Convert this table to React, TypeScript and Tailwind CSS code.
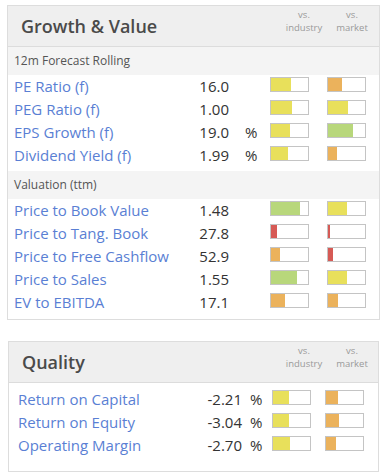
const YELLOW = '#e8e05b'
const ORANGE = '#ebb25c'
const GREEN = '#b8d77b'
const RED = '#d65a55'

type Row = { label: string; value: string; pct?: boolean; ind: [number, string]; mkt: [number, string] }

const forecast: Row[] = [
  { label: 'PE Ratio (f)', value: '16.0', ind: [20, YELLOW], mkt: [14, ORANGE] },
  { label: 'PEG Ratio (f)', value: '1.00', ind: [21, YELLOW], mkt: [20, YELLOW] },
  { label: 'EPS Growth (f)', value: '19.0', pct: true, ind: [19, YELLOW], mkt: [25, GREEN] },
  { label: 'Dividend Yield (f)', value: '1.99', pct: true, ind: [17, YELLOW], mkt: [9, ORANGE] },
]

const valuation: Row[] = [
  { label: 'Price to Book Value', value: '1.48', ind: [29, GREEN], mkt: [19, YELLOW] },
  { label: 'Price to Tang. Book', value: '27.8', ind: [6, RED], mkt: [2, RED] },
  { label: 'Price to Free Cashflow', value: '52.9', ind: [9, ORANGE], mkt: [5, RED] },
  { label: 'Price to Sales', value: '1.55', ind: [26, GREEN], mkt: [19, YELLOW] },
  { label: 'EV to EBITDA', value: '17.1', ind: [14, ORANGE], mkt: [10, ORANGE] },
]

const quality: Row[] = [
  { label: 'Return on Capital', value: '-2.21', pct: true, ind: [16, YELLOW], mkt: [12, ORANGE] },
  { label: 'Return on Equity', value: '-3.04', pct: true, ind: [16, YELLOW], mkt: [13, ORANGE] },
  { label: 'Operating Margin', value: '-2.70', pct: true, ind: [17, YELLOW], mkt: [10, ORANGE] },
]

function Bar({ fill }: { fill: [number, string] }) {
  return (
    <div className="mt-[2px] h-[15px] w-[39px] shrink-0 border border-[#c4c4c4] bg-white">
      <div className="h-full" style={{ width: fill[0], backgroundColor: fill[1] }} />
    </div>
  )
}

function VsLabel({ what }: { what: string }) {
  return (
    <div className="flex w-[48px] flex-col items-center text-[9.5px] leading-[13px] text-[#9a9a9a]">
      <span>vs.</span>
      <span>{what}</span>
    </div>
  )
}

function Header({ title, right }: { title: string; right: string }) {
  return (
    <div className={`flex h-[41px] items-start justify-between border-b border-[#dcdcdc] bg-[#efefef] pl-[13px] ${right}`}>
      <div className="self-center text-[18px] font-semibold text-[#4a4a4a]">{title}</div>
      <div className="flex pt-[2px]">
        <VsLabel what="industry" />
        <VsLabel what="market" />
      </div>
    </div>
  )
}

function SubHeader({ text }: { text: string }) {
  return (
    <div className="flex h-[28px] items-center bg-[#f4f4f4] pl-[6px] text-[12px] text-[#555555]">{text}</div>
  )
}

function MetricRow({ row }: { row: Row }) {
  return (
    <div className="flex h-[23px] items-start text-[15px] leading-[23px]">
      <div className="w-[175px] shrink-0 whitespace-nowrap text-[#5a7fd4]">{row.label}</div>
      <div className="w-[40px] shrink-0 text-right text-[#333333]">{row.value}</div>
      <div className="w-[41px] shrink-0 pl-[16px] text-[#333333]">{row.pct ? '%' : ''}</div>
      <Bar fill={row.ind} />
      <div className="w-[18px] shrink-0" />
      <Bar fill={row.mkt} />
    </div>
  )
}

function QualityRow({ row }: { row: Row }) {
  return (
    <div className="flex h-[23px] items-start text-[15px] leading-[23px]">
      <div className="w-[175px] shrink-0 whitespace-nowrap text-[#5a7fd4]">{row.label}</div>
      <div className="w-[49px] shrink-0 text-right text-[#333333]">{row.value}</div>
      <div className="w-[30px] shrink-0 pl-[8px] text-[#333333]">%</div>
      <Bar fill={row.ind} />
      <div className="w-[14px] shrink-0" />
      <Bar fill={row.mkt} />
    </div>
  )
}

export default function App() {
  return (
    <div className="min-h-[473px] w-[387px] bg-white pt-[5px] font-['Open_Sans',sans-serif]">
      <div className="ml-[7px] w-[373px] border border-[#dddddd]">
        <Header title="Growth & Value" right="pr-[3px]" />
        <SubHeader text="12m Forecast Rolling" />
        <div className="pb-[4px] pl-[6px]">
          {forecast.map((r) => <MetricRow key={r.label} row={r} />)}
        </div>
        <SubHeader text="Valuation (ttm)" />
        <div className="pb-[5px] pl-[6px]">
          {valuation.map((r) => <MetricRow key={r.label} row={r} />)}
        </div>
      </div>

      <div className="ml-[8px] mt-[21px] w-[371px] border border-[#dddddd]">
        <Header title="Quality" right="pr-[2px]" />
        <div className="pb-[14px] pl-[9px] pt-[5px]">
          {quality.map((r) => <QualityRow key={r.label} row={r} />)}
        </div>
      </div>
    </div>
  )
}
